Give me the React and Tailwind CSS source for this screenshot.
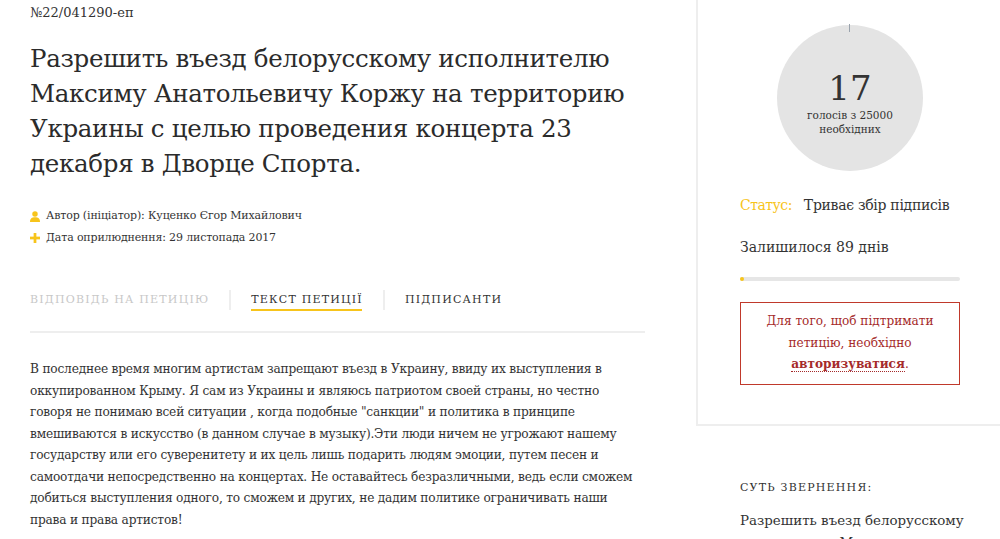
import React from "react";

const serif = { fontFamily: '"DejaVu Serif", "Liberation Serif", serif' };

function UserIcon() {
  return (
    <svg width="10" height="11" viewBox="0 0 11 12" className="shrink-0">
      <circle cx="5.5" cy="3.2" r="3" fill="#f7c41b" />
      <path d="M0 12 C0 8 2 6.8 5.5 6.8 C9 6.8 11 8 11 12 Z" fill="#f7c41b" />
    </svg>
  );
}

function PlusIcon() {
  return (
    <svg width="10" height="10" viewBox="0 0 11 11" className="shrink-0">
      <rect x="4" y="0" width="3" height="11" fill="#f7c41b" />
      <rect x="0" y="4" width="11" height="3" fill="#f7c41b" />
    </svg>
  );
}

export default function App() {
  const body = [
    "В последнее время многим артистам запрещают въезд в Украину, ввиду их выступления в",
    "оккупированном Крыму. Я сам из Украины и являюсь патриотом своей страны, но честно",
    "говоря не понимаю всей ситуации , когда подобные \"санкции\" и политика в принципе",
    "вмешиваются в искусство (в данном случае в музыку).Эти люди ничем не угрожают нашему",
    "государству или его суверенитету и их цель лишь подарить людям эмоции, путем песен и",
    "самоотдачи непосредственно на концертах. Не оставайтесь безразличными, ведь если сможем",
    "добиться выступления одного, то сможем и других, не дадим политике ограничивать наши",
    "права и права артистов!",
  ];
  return (
    <div className="w-[1000px] h-[539px] overflow-hidden bg-white flex text-[#333]" style={serif}>
      <div className="w-[696px] shrink-0 pl-[30px] pr-[51px]">
        <div className="pt-[5px] text-[13px] leading-[16px]">№22/041290-еп</div>
        <h1 className="mt-[20px] text-[24.5px] tracking-[-0.3px] leading-[35px] font-normal text-[#2b2b2b] whitespace-nowrap">
          Разрешить въезд белорусскому исполнителю<br />
          Максиму Анатольевичу Коржу на территорию<br />
          Украины с целью проведения концерта 23<br />
          декабря в Дворце Спорта.
        </h1>
        <div className="mt-[27px] flex flex-col gap-[6px] text-[11px] tracking-[-0.15px] leading-[16px]">
          <div className="flex items-center gap-[6px]">
            <UserIcon />
            <span>Автор (ініціатор): Куценко Єгор Михайлович</span>
          </div>
          <div className="flex items-center gap-[6px]">
            <PlusIcon />
            <span>Дата оприлюднення: 29 листопада 2017</span>
          </div>
        </div>
        <div className="mt-[44px] flex items-center text-[11px] tracking-[1.2px] leading-[20px]">
          <span className="text-[#c8c8c8]">ВІДПОВІДЬ НА ПЕТИЦІЮ</span>
          <span className="mx-[20px] w-[2px] h-[20px] bg-[#eee]" />
          <span className="relative">
            ТЕКСТ ПЕТИЦІЇ
            <span className="absolute left-0 right-[1px] bottom-[-1px] h-[2px] bg-[#f7c41b]" />
          </span>
          <span className="mx-[20px] w-[2px] h-[20px] bg-[#eee]" />
          <span>ПІДПИСАНТИ</span>
        </div>
        <div className="mt-[21px] h-[2px] bg-[#eee]" />
        <div className="mt-[26px] text-[12.2px] tracking-[-0.2px] leading-[21.5px] whitespace-nowrap">
          {body.map((l, i) => (
            <div key={i}>{l}</div>
          ))}
        </div>
      </div>
      <div className="flex-1 flex flex-col">
        <div className="h-[426px] shrink-0 border-l-2 border-b-2 border-[#eee] pl-[42px] pr-[40px] flex flex-col">
          <div className="relative shrink-0 mt-[25px] ml-[37px] w-[146px] h-[146px] rounded-full bg-[#e4e4e4] flex flex-col items-center justify-center">
            <span className="absolute top-[-1px] left-[72px] w-[1px] h-[8px] bg-[#9aa3ad]" />
            <div className="text-[34px] leading-[36px] mt-[10px]">17</div>
            <div className="text-[10.5px] leading-[14px] text-center mt-[2px]">
              голосів з 25000<br />необхідних
            </div>
          </div>
          <div className="mt-[24px] text-[14px] leading-[20px] flex whitespace-nowrap">
            <span className="text-[#f7c41b] mr-[12px] tracking-[-0.5px]">Статус:</span>
            <span className="tracking-[-0.3px]">Триває збір підписів</span>
          </div>
          <div className="mt-[22px] text-[14px] leading-[20px]">Залишилося 89 днів</div>
          <div className="mt-[20px] shrink-0 h-[4px] w-[220px] rounded-full bg-[#e6e6e6] relative">
            <div className="absolute left-0 top-0 h-[4px] w-[4px] rounded-full bg-[#f7c41b]" />
          </div>
          <div className="mt-[21px] shrink-0 w-[220px] h-[83px] border border-[#c0392b] flex flex-col items-center justify-center text-[12.1px] leading-[21.5px] text-[#a52a2a] text-center">
            <div>Для того, щоб підтримати</div>
            <div>петицію, необхідно</div>
            <div>
              <span className="font-bold border-b border-dotted border-[#a52a2a]">авторизуватися</span>.
            </div>
          </div>
        </div>
        <div className="pl-[44px] mt-[53px] shrink-0 text-[11px] tracking-[1.2px] leading-[18px]">СУТЬ ЗВЕРНЕННЯ:</div>
        <div className="pl-[44px] mt-[13px] shrink-0 text-[13.4px] leading-[22px] whitespace-nowrap">
          Разрешить въезд белорусскому<br />исполнителю Максиму
        </div>
      </div>
    </div>
  );
}
